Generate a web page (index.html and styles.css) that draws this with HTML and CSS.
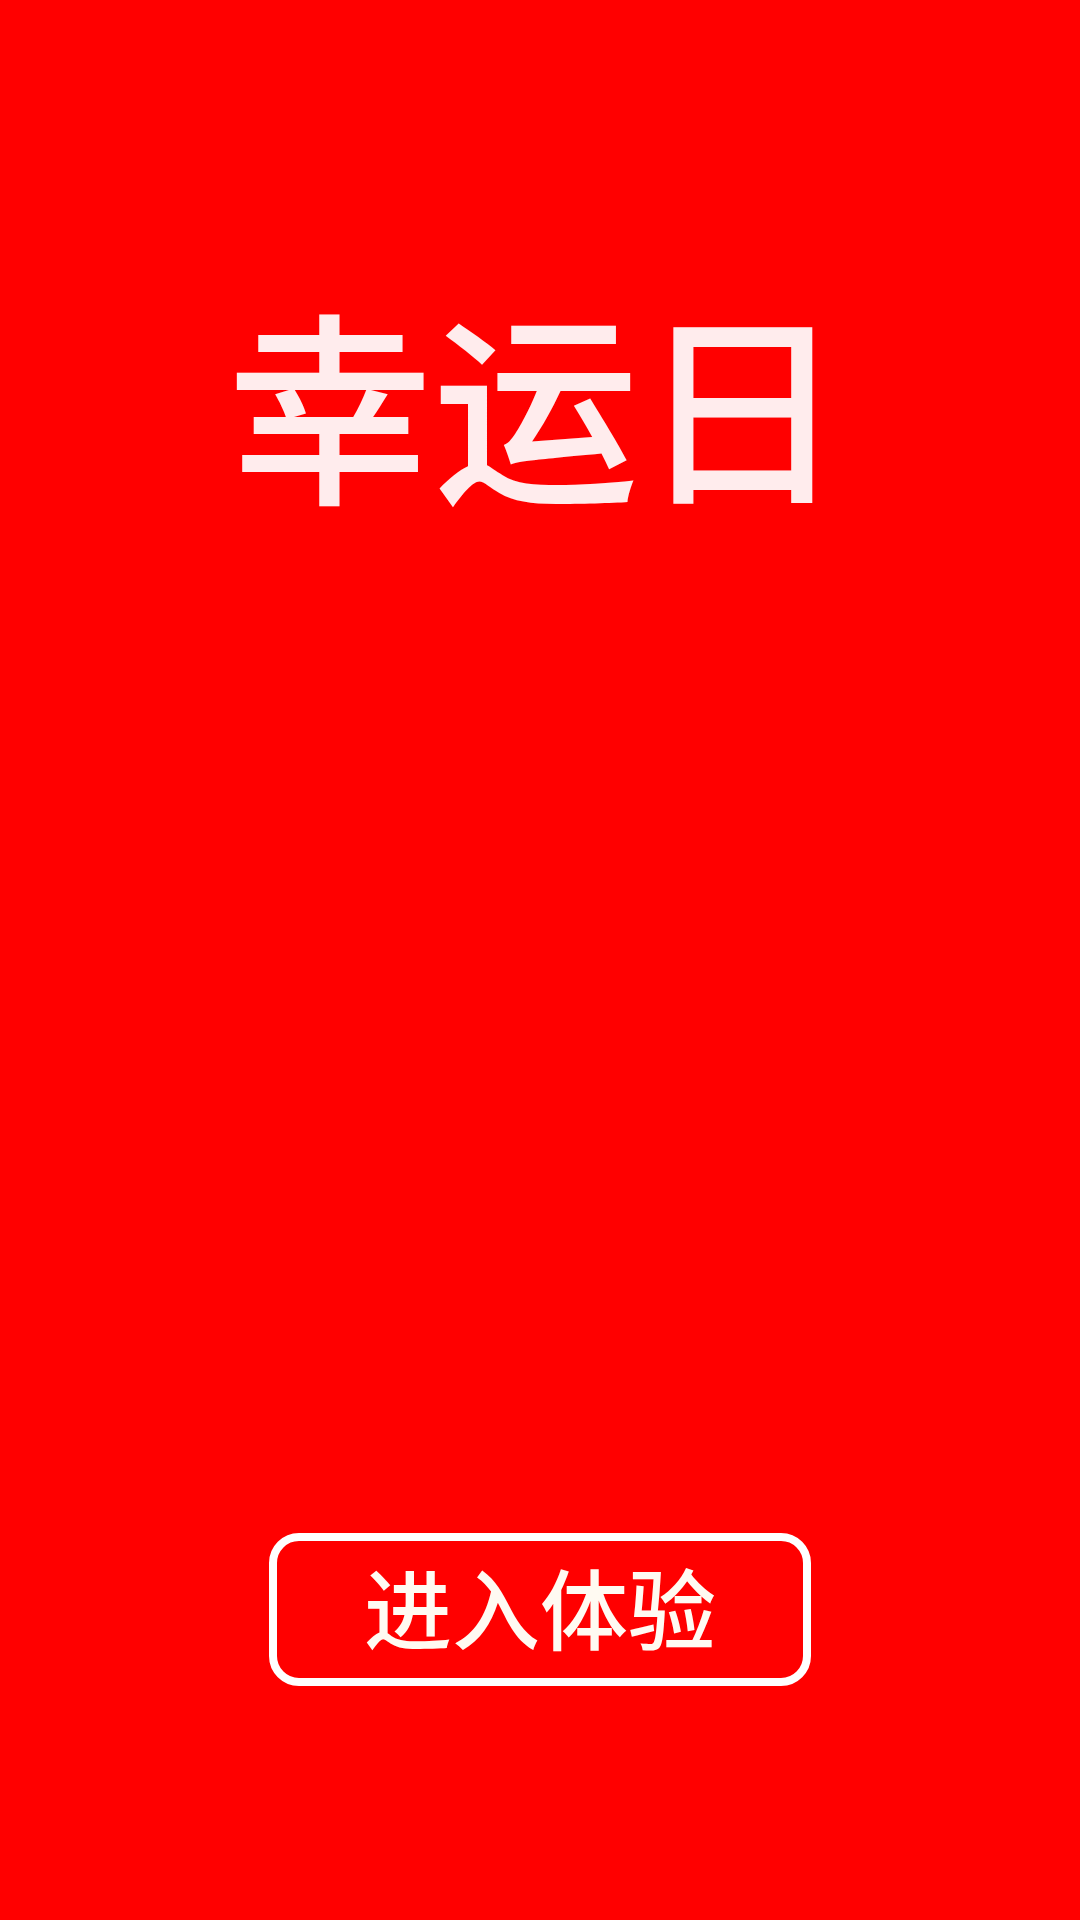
FILE: index.html
```html
<!DOCTYPE html>
<html lang="zh-CN">
<head>
<meta charset="utf-8">
<title>幸运日</title>
<link rel="stylesheet" href="styles.css">
</head>
<body>
<main class="page">
  <h1 class="title">幸运日</h1>
  <div class="spacer"></div>
  <button class="enter-btn">进入体验</button>
</main>
</body>
</html>
```
FILE: styles.css
```css
html, body {
  margin: 0;
  padding: 0;
  background: #ff0000;
}
.page {
  width: 1080px;
  height: 1920px;
  display: flex;
  flex-direction: column;
  align-items: center;
  box-sizing: border-box;
  padding-top: 278px;
  font-family: "Noto Sans CJK SC", "Noto Sans", sans-serif;
}
.title {
  margin: 0 8px 0 0;
  font-size: 206px;
  line-height: 240px;
  font-weight: 500;
  color: #ffeced;
  letter-spacing: 0;
}
.spacer {
  flex: 0 0 1015px;
}
.enter-btn {
  width: 542px;
  height: 153px;
  box-sizing: border-box;
  border: 8px solid #ffffff;
  border-radius: 30px;
  background: transparent;
  color: #fffaf2;
  font-family: "Noto Sans CJK SC", "Noto Sans", sans-serif;
  font-size: 88px;
  font-weight: 500;
  line-height: 1;
  letter-spacing: 0;
  padding: 0 0 10px 0;
  display: flex;
  align-items: center;
  justify-content: center;
}
```
